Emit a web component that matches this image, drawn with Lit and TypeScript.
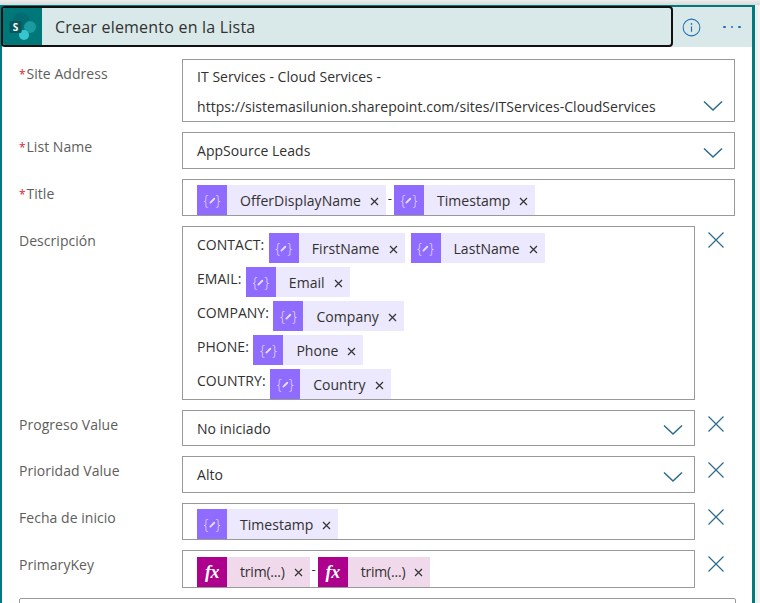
import { LitElement, html, css } from "lit";
import { customElement } from "lit/decorators.js";

const chevron = html`<svg class="chev" viewBox="0 0 20 12" width="20" height="12"><path d="M1 1.5 L10 10 L19 1.5" fill="none" stroke="#2a6a8e" stroke-width="1.5"/></svg>`;
const cross = html`<svg class="cross" viewBox="0 0 16 16" width="16" height="16"><path d="M0.5 0.5 L15.5 15.5 M15.5 0.5 L0.5 15.5" fill="none" stroke="#2a6a8e" stroke-width="1.2"/></svg>`;
const tinyX = html`<svg class="tx" viewBox="0 0 9 9" width="9" height="9"><path d="M1 1 L8 8 M8 1 L1 8" fill="none" stroke="#333" stroke-width="1.2"/></svg>`;

function tok(name: string, fx = false) {
  return html`<span class="tok ${fx ? "fx" : ""}">
    <span class="ti">${fx ? html`<i class="fxt">fx</i>` : html`<span class="br">{<svg viewBox="0 0 8 8" width="7" height="7"><path d="M1.6 6.4 L6 2" fill="none" stroke="#e6ddff" stroke-width="2.2" stroke-linecap="round"/></svg>}</span>`}</span>
    <span class="tn">${name}</span>${tinyX}
  </span>`;
}

@customElement("app-root")
export class AppRoot extends LitElement {
  static styles = css`
    :host { display: block; width: 760px; height: 603px; overflow: hidden; background: linear-gradient(90deg,#fff 0,#fff 755px,#ececec 756px,#f6f6f6 760px); font-family: "Open Sans", "Noto Sans", sans-serif; font-size: 14px; color: #323130; letter-spacing: 0.04px; }
    .top { height: 5px; background: linear-gradient(#eeeeee,#d8d8d8); }
    .card { width: 755px; box-sizing: border-box; height: 598px; border-left: 2px solid #007a7c; border-right: 3px solid #007a7c; border-top: 2px solid #007a7c; }
    .head { display: flex; height: 40px; background: #d9e8e8; align-items: stretch; position: relative; }
    .title { width: 672px; box-sizing: border-box; margin: -1px 0 0 -1px; height: 41px; border: 2px solid #111; border-radius: 4px; display: flex; background: #d9e8e8; overflow: hidden; }
    .logo { width: 39px; background: #00787a; display: flex; align-items: center; justify-content: center; flex: none; }
    .title span { font-size: 16px; margin-left: 13px; line-height: 39px; color: #323130; letter-spacing: 0.21px; }
    .acts { flex: 1; display: flex; align-items: center; padding-left: 9px; gap: 22px; }
    .dots { display: flex; gap: 5px; }
    .dots b { width: 2.5px; height: 2.5px; background: #1f6fb5; border-radius: 50%; }
    .form { display: flex; flex-direction: column; gap: 10px; padding: 12px 0 0 17px; }
    .row { display: flex; align-items: flex-start; }
    .lab { width: 163px; flex: none; color: #605e5c; font-size: 14px; line-height: 20px; padding-top: 5px; box-sizing: border-box; }
    .lab em { color: #e0202a; font-style: normal; font-size: 12px; display: inline-block; width: 7.5px; }
    .box { border: 1px solid #999; box-sizing: border-box; width: 553px; padding: 0 14px; position: relative; color: #323130; }
    .box.short { width: 513px; }
    .rem { margin: 6px 0 0 13px; line-height: 0; }
    .chev { position: absolute; right: 11px; bottom: 9px; }
    .site { height: 63px; line-height: 30px; padding-top: 2px; }
    .sel { height: 37px; line-height: 35px; }
    .sel.s36 { height: 36px; line-height: 35px; }
    .tokens { display: flex; align-items: center; padding-top: 5px; height: 37px; }
    .tokens.t38 { height: 38px; }
    .desc { height: 174px; padding-top: 6px; display: flex; flex-direction: column; gap: 4px; }
    .line { display: flex; height: 30px; align-items: flex-start; }
    .line > .t { line-height: 24px; margin-right: 4.5px; }
    .line .tok + .tok { margin-left: 6px; }
    .tok { display: inline-flex; align-items: center; height: 30px; background: #ece8fd; flex: none; }
    .tok.fx { background: #f1d9ec; }
    .ti { width: 30px; height: 30px; background: #8f6bff; display: flex; align-items: center; justify-content: center; color: #e6ddff; }
    .tok.fx .ti { background: #ad008c; color: #fff; }
    .br { font-size: 14px; font-weight: 300; font-family: "Open Sans", sans-serif; display: inline-flex; align-items: center; gap: 0; }
    .fxt { font-family: "Liberation Serif", serif; font-weight: bold; font-size: 18px; line-height: 1; letter-spacing: -0.4px; }
    .tn { margin-left: 13px; }
    .fx .tn { letter-spacing: -0.2px; }
    .tx { margin: 2px 7px 0 9px; }
    .dash { width: 8px; text-align: center; height: 30px; line-height: 26px; font-size: 13px; flex: none; align-self: flex-start; }
    .last { border: 1px solid #999; border-radius: 2px; width: 717px; height: 30px; box-sizing: border-box; }
  `;
  render() {
    return html`<div class="top"></div>
    <div class="card">
      <div class="head">
        <div class="title">
          <div class="logo"><svg viewBox="0 0 30 30" width="30" height="30">
            <circle cx="13" cy="9" r="8.5" fill="#036c70"/><circle cx="22" cy="15" r="6" fill="#1a9ba1"/><circle cx="16" cy="23" r="5" fill="#37c6d0"/>
            <rect x="1.5" y="9" width="12" height="12" rx="1.2" fill="#05585b"/>
            <text x="7.5" y="18.8" fill="#fff" font-size="10" font-weight="700" text-anchor="middle" font-family="Open Sans">S</text>
          </svg></div>
          <span>Crear elemento en la Lista</span>
        </div>
        <div class="acts">
          <svg viewBox="0 0 20 20" width="19" height="19"><circle cx="10" cy="10" r="8.8" fill="none" stroke="#1f6fb5" stroke-width="1.1"/><path d="M10 8.8 V14.5" stroke="#1f6fb5" stroke-width="1.2"/><circle cx="10" cy="6.2" r=".9" fill="#1f6fb5"/></svg>
          <div class="dots"><b></b><b></b><b></b></div>
        </div>
      </div>
      <div class="form">
        <div class="row"><div class="lab"><em>*</em>Site Address</div><div class="box site">IT Services - Cloud Services -<br>https://sistemasilunion.sharepoint.com/sites/ITServices-CloudServices${chevron}</div></div>
        <div class="row"><div class="lab"><em>*</em>List Name</div><div class="box sel">AppSource Leads${chevron}</div></div>
        <div class="row"><div class="lab"><em>*</em>Title</div><div class="box tokens">${tok("OfferDisplayName")}<span class="dash">-</span>${tok("Timestamp")}</div></div>
        <div class="row"><div class="lab">Descripción</div><div class="box short desc">
          <div class="line"><span class="t">CONTACT:</span>${tok("FirstName")}${tok("LastName")}</div>
          <div class="line"><span class="t">EMAIL:</span>${tok("Email")}</div>
          <div class="line"><span class="t">COMPANY:</span>${tok("Company")}</div>
          <div class="line"><span class="t">PHONE:</span>${tok("Phone")}</div>
          <div class="line"><span class="t">COUNTRY:</span>${tok("Country")}</div>
        </div><div class="rem">${cross}</div></div>
        <div class="row"><div class="lab">Progreso Value</div><div class="box short sel s36">No iniciado${chevron}</div><div class="rem">${cross}</div></div>
        <div class="row"><div class="lab">Prioridad Value</div><div class="box short sel">Alto${chevron}</div><div class="rem">${cross}</div></div>
        <div class="row"><div class="lab">Fecha de inicio</div><div class="box short tokens">${tok("Timestamp")}</div><div class="rem">${cross}</div></div>
        <div class="row"><div class="lab">PrimaryKey</div><div class="box short tokens t38">${tok("trim(...)", true)}<span class="dash">-</span>${tok("trim(...)", true)}</div><div class="rem">${cross}</div></div>
        <div class="last"></div>
      </div>
    </div>`;
  }
}
